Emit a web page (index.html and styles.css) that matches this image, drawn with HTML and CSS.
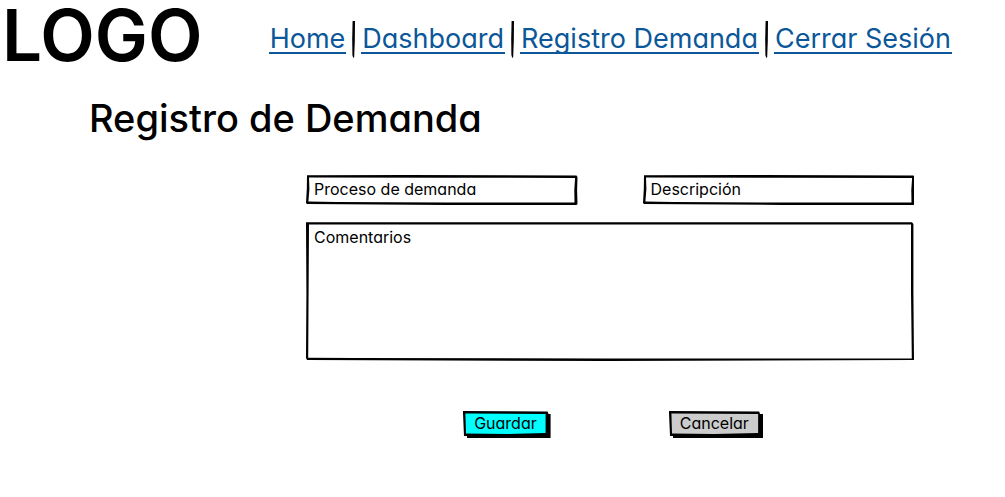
FILE: index.html
```html
<!DOCTYPE html>
<html lang="es">
<head>
<meta charset="utf-8">
<meta name="viewport" content="width=device-width, initial-scale=1">
<title>Registro de Demanda</title>
<link rel="stylesheet" href="styles.css">
</head>
<body>
<header class="header">
  <div class="logo">LOGO</div>
  <nav class="nav">
    <a class="nav-link" href="#home">Home</a>
    <svg class="separator" viewBox="0 0 3 37" aria-hidden="true"><path d="M.6 0L3 0L2.8 20L2.2 36L1.2 37L.4 34L.2 18Z"/></svg>
    <a class="nav-link" href="#dashboard">Dashboard</a>
    <svg class="separator" viewBox="0 0 3 37" aria-hidden="true"><path d="M.6 0L3 0L2.8 20L2.2 36L1.2 37L.4 34L.2 18Z"/></svg>
    <a class="nav-link" href="#registro">Registro Demanda</a>
    <svg class="separator" viewBox="0 0 3 37" aria-hidden="true"><path d="M.6 0L3 0L2.8 20L2.2 36L1.2 37L.4 34L.2 18Z"/></svg>
    <a class="nav-link" href="#salir">Cerrar Sesión</a>
  </nav>
</header>
<main>
  <h1 class="title">Registro de Demanda</h1>
  <form class="form">
    <div class="fields">
      <div class="field">
        <svg class="sketch" viewBox="0 0 271 30" preserveAspectRatio="none" aria-hidden="true"><path fill-rule="evenodd" d="M1 .3L100 0L270 .5L271 2L270.6 15L271 29L270 30L140 30L1 29L0 28L.8 14ZM3 2.6L3.4 14L2.4 26.6L30 27L140 27.6L268 27.6L267.8 15L268.6 3L140 2.7Z"/></svg>
        <input class="control" type="text" name="proceso" placeholder="Proceso de demanda" aria-label="Proceso de demanda">
      </div>
      <div class="field">
        <svg class="sketch" viewBox="0 0 271 30" preserveAspectRatio="none" aria-hidden="true"><path fill-rule="evenodd" d="M1 .3L100 0L270 .5L271 2L270.6 15L271 29L270 30L140 30L1 29L0 28L.8 14ZM3 2.6L3.4 14L2.4 26.6L30 27L140 27.6L268 27.6L267.8 15L268.6 3L140 2.7Z"/></svg>
        <input class="control" type="text" name="descripcion" placeholder="Descripción" aria-label="Descripción">
      </div>
      <div class="field field-wide">
        <svg class="sketch" viewBox="0 0 608 139" preserveAspectRatio="none" aria-hidden="true"><path fill-rule="evenodd" d="M0 .3L606 .3L607.4 2L607.4 70L608 138L300 139L1 138L0 136L.4 70ZM3 2.6L2.6 70L2.2 135.8L50 136L300 136.6L605.8 136.4L605 70L605 2.6L300 2.4Z"/></svg>
        <textarea class="control control-area" name="comentarios" placeholder="Comentarios" aria-label="Comentarios"></textarea>
      </div>
    </div>
    <div class="actions">
      <button class="button" type="submit">
        <svg class="sketch" viewBox="0 0 88 27" preserveAspectRatio="none" aria-hidden="true"><path d="M0 0L85 .5L86 3L88 3L88 27L4 27L4 25L1 25L0 2Z"/><path class="fill-primary" d="M2.4 2.4L83 3L83 22L45 23L3 22.4Z"/></svg>
        <span class="button-text">Guardar</span>
      </button>
      <button class="button" type="reset">
        <svg class="sketch" viewBox="0 0 94 27" preserveAspectRatio="none" aria-hidden="true"><path d="M0 0L90 .5L91 3L94 3L94 27L4 27L4 25L1 25L0 2Z"/><path class="fill-neutral" d="M2.4 2.4L89 3L89 22L45 23L3 22.4Z"/></svg>
        <span class="button-text">Cancelar</span>
      </button>
    </div>
  </form>
</main>
</body>
</html>
```
FILE: styles.css
```css
* {
  box-sizing: border-box;
}

body {
  margin: 0;
  background: #fff;
  color: #000;
  font-family: Inter, "Open Sans", sans-serif;
  font-feature-settings: "cv11";
}

.header {
  display: flex;
  align-items: flex-start;
  justify-content: space-between;
  padding: 0 53px 0 2px;
}

.logo {
  font-size: 71px;
  line-height: 71px;
  font-weight: 600;
}

.nav {
  display: flex;
  align-items: center;
  gap: 6px;
  padding-top: 21px;
}

.nav-link {
  padding: 0 1px;
  border-bottom: 2px solid #0b5799;
  color: #0b5799;
  font-size: 27px;
  line-height: 26px;
  text-decoration: none;
  white-space: nowrap;
}

.separator {
  width: 3px;
  height: 37px;
}

.title {
  margin: 23px 0 0 89px;
  font-size: 38px;
  line-height: 48px;
  font-weight: 500;
}

.form {
  margin-top: 33px;
  padding: 0 91px 0 306px;
}

.fields {
  display: grid;
  grid-template-columns: 1fr 1fr;
  gap: 17px 65px;
}

.field {
  position: relative;
  display: flex;
}

.field-wide {
  grid-column: 1 / -1;
}

.sketch {
  position: absolute;
  inset: 0;
  width: 100%;
  height: 100%;
  pointer-events: none;
}

.control {
  position: relative;
  width: 100%;
  padding: 4px 8px 6px;
  border: 0;
  background: transparent;
  color: #000;
  font: inherit;
  font-size: 16px;
  line-height: 20px;
  font-feature-settings: inherit;
}

.control::placeholder {
  color: #000;
  opacity: 1;
}

.control-area {
  height: 139px;
  padding-top: 5px;
  resize: none;
}

.actions {
  display: flex;
  justify-content: center;
  gap: 118px;
  margin-top: 50px;
  padding-left: 6px;
}

.button {
  position: relative;
  padding: 2px 14px 5px 11px;
  border: 0;
  background: transparent;
  color: #000;
  font: inherit;
  font-size: 16px;
  line-height: 20px;
  font-feature-settings: inherit;
  cursor: pointer;
}

.button-text {
  position: relative;
}

.fill-primary {
  fill: #0ff;
}

.fill-neutral {
  fill: #ccc;
}
```
